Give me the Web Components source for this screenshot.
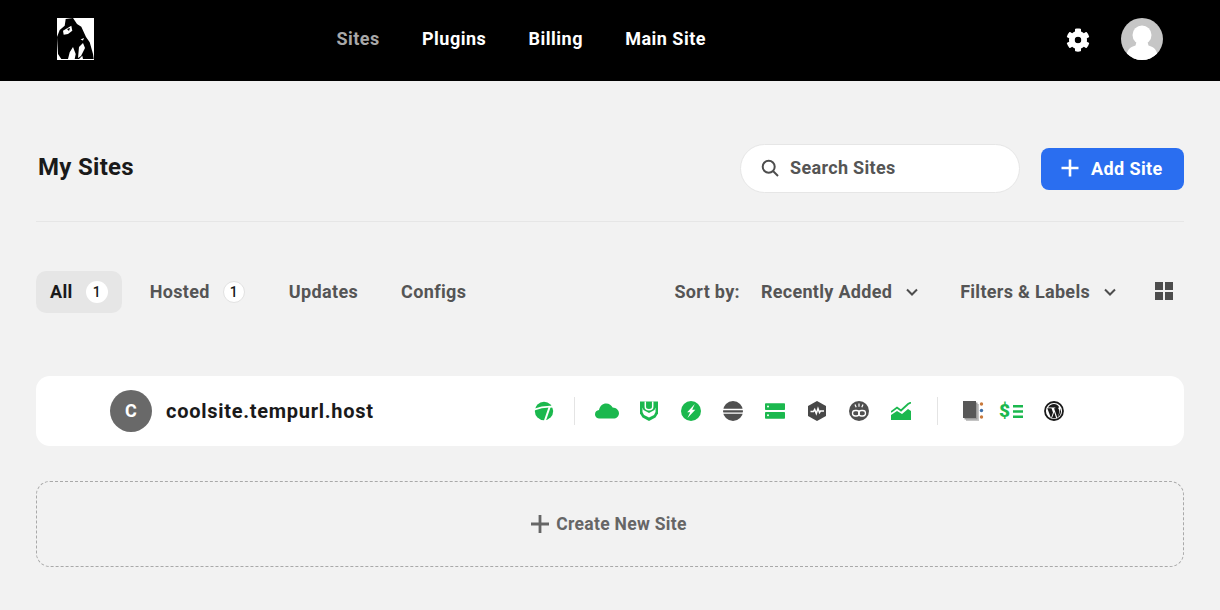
<!DOCTYPE html>
<html lang="en"><head><meta charset="utf-8"><title>My Sites</title>
<style>
html,body{margin:0;padding:0;background:#f2f2f2;font-family:Roboto,"Liberation Sans",sans-serif;height:610px;overflow:hidden}
</style></head><body>
<app-header></app-header>
<sites-page></sites-page>
<script>
const G='#1bb84e',D='#4f4f4f';
const ICONS={
 turn:`<svg viewBox="0 0 20 20" width="20" height="20"><circle cx="10" cy="10" r="9.200" fill="${G}"/><path d="M0 8.600C6 6.200 13 5.200 20 5.800" fill="none" stroke="#fff" stroke-width="1.700"/><path d="M15.800 5.500 10.800 20" fill="none" stroke="#fff" stroke-width="2"/></svg>`,
 cloud:`<svg viewBox="0 0 24 16" width="24" height="16"><path d="M5 15.600C2.200 15.600 0 13.800 0 11.200 0 8.900 1.800 7.300 4 7 4.700 3 7.600.4 11.200.4c3 0 5.400 1.700 6.400 4.200 3.600.1 6.400 2.800 6.400 5.700 0 3-2.400 5.300-5.600 5.300z" fill="${G}"/></svg>`,
 shield:`<svg viewBox="0 0 20 20" width="20" height="20"><path d="M1 .5h18v12l-2.500 4-6.500 3.500-6.500-3.500-2.500-4z" fill="${G}"/><path d="M6.300 .5v5.200c0 2 1.700 3 3.700 3s3.700-1 3.700-3V.5" fill="none" stroke="#fff" stroke-width="1.500"/><path d="M3.500 6.500l1 2.500L10 12l5.500-3 1-2.500V11l-1.500 3-5 2.500L5 14l-1.500-3z" fill="#fff"/></svg>`,
 bolt:`<svg viewBox="0 0 20 20" width="20" height="20"><circle cx="10" cy="10" r="10" fill="${G}"/><path d="M13.800 3 6.200 11.200h3L6.500 17l7.800-8.300h-3.100z" fill="#fff"/></svg>`,
 eclipse:`<svg viewBox="0 0 20 20" width="20" height="20"><circle cx="10" cy="10" r="10" fill="${D}"/><path d="M0 7.800h20v1.400H0zM0 11.400h20v1.400H0z" fill="#fff"/></svg>`,
 server:`<svg viewBox="0 0 20 16" width="20" height="16"><rect y=".3" width="20" height="6.700" rx=".8" fill="${G}"/><rect y="9" width="20" height="6.700" rx=".8" fill="${G}"/><circle cx="3" cy="3.600" r="1" fill="#fff"/><circle cx="3" cy="12.300" r="1" fill="#fff"/></svg>`,
 hex:`<svg viewBox="0 0 18 20" width="18" height="20"><path d="M9 0l9 5v10l-9 5-9-5V5z" fill="#484848"/><path d="M2.500 10.500h3l1.200-2 1.600 4 1.700-5 1.500 4 1-1.500h3.500" fill="none" stroke="#fff" stroke-width="1.500"/></svg>`,
 cs:`<svg viewBox="0 0 20 20" width="20" height="20"><circle cx="10" cy="10" r="10" fill="${D}"/><path d="M10 2.500v3.200M6 3.500l1.200 2.700M14 3.500l-1.200 2.700" stroke="#fff" stroke-width="1.200"/><rect x="3.500" y="9.500" width="6.800" height="5.500" rx="2.700" fill="none" stroke="#fff" stroke-width="1.300"/><rect x="9.700" y="9.500" width="6.800" height="5.500" rx="2.700" fill="none" stroke="#fff" stroke-width="1.300"/></svg>`,
 chart:`<svg viewBox="0 0 20 18" width="20" height="18"><path d="M0 13l6-4 5 3 6-5 3 2v9H0z" fill="${G}"/><path d="M0 10l6-4.500 4 3L17 2l3-1.500" fill="none" stroke="${G}" stroke-width="1.800"/></svg>`,
 pages:`<svg viewBox="0 0 21 20" width="21" height="20"><rect x="3" y="3" width="13" height="17" fill="#c4c4c4"/><rect x="1.500" y="1.500" width="13" height="17" fill="#9a9a9a"/><rect width="13" height="17" fill="#585858"/><circle cx="18.500" cy="3" r="1.700" fill="#c8793c"/><circle cx="18.500" cy="9.500" r="1.700" fill="#3f6fa8"/><circle cx="18.500" cy="16" r="1.700" fill="#c8793c"/></svg>`,
 bars:`<svg viewBox="0 0 10 13" width="10" height="13"><path d="M0 0h10v2.500H0zM0 5.250h10v2.500H0zM0 10.500h10V13H0z" fill="${G}"/></svg>`,
 wp:`<svg viewBox="0 0 20 20" width="20" height="20"><circle cx="10" cy="10" r="9" fill="none" stroke="#1a1a1a" stroke-width="1.800"/><path d="M3.300 7.200 7 17.300l2-5.700-1.500-4.300H6.300v-.9h5v.9H10l3.500 10 1.600-5.500c.5-1.800.2-2.800-.5-3.900-.5-.7-.4-1.600.6-1.700C14 4 12.200 3.100 10 3.100c-2.500 0-4.800 1.600-6 3.400h2.300v.7z M10.200 11 8 17c1.300.4 2.700.4 4.100-.1zM16.400 7.300c.2 2-.3 3.300-2.400 9 2.300-1.500 4-5.500 2.400-9z" fill="#1a1a1a"/></svg>`
};
function def(name,css,html){
 customElements.define(name,class extends HTMLElement{
  connectedCallback(){
   if(this.shadowRoot)return;
   const s=this.attachShadow({mode:'open'});
   s.innerHTML=`<style>${css}</style>`+html;
  }
 });
}
def('gorilla-logo',':host{display:block;width:37px;height:42px;background:#fff} svg{display:block}',
 `<svg viewBox="0 0 37 42" width="37" height="42"><path d="M8.700 1 16 0l4 6 4.300 2.700L29 19l3.700 5.300L36 36l.7 5H26l-.7-3.300L22 41h-4.300l1-5L16 29l-3.300 5.300L11 41H4.300L1 36 0 19l2.700-7 5-4.300z" fill="#000"/><path d="M6 12.700l8.300-5 1 5-4.300 3.300-4.300.7z" fill="#fff"/><path d="M10 11l3-1-1 3z" fill="#000"/><path d="M22 29l4-4 2 5-4 8-3 2z" fill="#fff"/><path d="M23.500 21.500l3.500-1.500-1 2.500z" fill="#fff"/></svg>`);
def('nav-link',':host{display:block;font:700 18px/22px Roboto,sans-serif;letter-spacing:.5px;color:#fff;white-space:nowrap} :host([active]){color:#a8a8a8}','<slot></slot>');
def('app-header',
 `:host{display:flex;align-items:center;height:81px;background:#000;box-sizing:border-box;padding:0 57px 3px}
  nav{display:flex;gap:42.200px;margin-left:242.400px}
  .r{margin-left:auto;display:flex;align-items:center}
  .gear{display:block;width:24px;height:24px;margin-top:2px}
  .av{margin-left:31px;width:42px;height:42px;display:block}`,
 `<gorilla-logo></gorilla-logo>
  <nav><nav-link active>Sites</nav-link><nav-link>Plugins</nav-link><nav-link>Billing</nav-link><nav-link>Main Site</nav-link></nav>
  <div class="r"><svg class="gear" viewBox="0 0 512 512"><path fill="#fff" d="M487.4 315.7l-42.6-24.6c4.3-23.2 4.3-47 0-70.2l42.6-24.6c4.900-2.800 7.100-8.600 5.500-14-11.100-35.600-30-67.800-54.700-94.600-3.800-4.100-10-5.100-14.800-2.300L380.800 110c-17.900-15.400-38.500-27.300-60.800-35.100V25.800c0-5.600-3.900-10.500-9.400-11.700-36.700-8.200-74.300-7.800-109.200 0-5.500 1.200-9.400 6.100-9.400 11.700V75c-22.200 7.900-42.800 19.800-60.800 35.100L88.700 85.500c-4.900-2.800-11-1.900-14.800 2.300-24.700 26.700-43.600 58.900-54.700 94.600-1.700 5.400.6 11.200 5.500 14L67.300 221c-4.300 23.200-4.300 47 0 70.200l-42.600 24.600c-4.900 2.800-7.100 8.600-5.500 14 11.100 35.600 30 67.800 54.700 94.600 3.800 4.100 10 5.100 14.800 2.300l42.600-24.600c17.900 15.400 38.500 27.300 60.800 35.100v49.200c0 5.600 3.900 10.500 9.400 11.700 36.700 8.200 74.300 7.800 109.200 0 5.500-1.200 9.400-6.100 9.400-11.700v-49.200c22.200-7.900 42.800-19.800 60.800-35.100l42.600 24.600c4.900 2.800 11 1.900 14.800-2.300 24.700-26.700 43.600-58.900 54.700-94.600 1.500-5.500-.7-11.300-5.600-14.100zM256 336c-44.100 0-80-35.900-80-80s35.900-80 80-80 80 35.900 80 80-35.900 80-80 80z"/><circle cx="256" cy="256" r="95" fill="none" stroke="#fff" stroke-width="50"/></svg>
  <svg class="av" viewBox="0 0 42 42"><defs><clipPath id="c"><circle cx="21" cy="21" r="21"/></clipPath></defs><circle cx="21" cy="21" r="21" fill="#c6c6c6"/><g clip-path="url(#c)" fill="#fff"><circle cx="21" cy="17" r="9.500"/><path d="M15.500 24h11l1 3.500C33 29 37 32 37 42H5c0-10 4-13 9.500-14.500z"/></g></svg></div>`);
def('search-box',
 `:host{display:flex;align-items:center;box-sizing:border-box;width:280px;height:49px;background:#fff;border:1px solid #e6e6e6;border-radius:25px;padding:0 0 0 20px;font:700 18px Roboto,sans-serif;color:#555;letter-spacing:.33px}
  span{display:block;padding-bottom:2px}
  svg{width:18px;height:18px;margin-right:11px;flex:none}`,
 `<svg viewBox="0 0 18 18"><circle cx="7.700" cy="7.700" r="6" fill="none" stroke="#4d4d4d" stroke-width="2"/><path d="M12 12l5 5" stroke="#4d4d4d" stroke-width="2"/></svg><span><slot></slot></span>`);
def('primary-button',
 `:host{display:flex;align-items:center;box-sizing:border-box;width:143px;height:42px;background:#2a6ef0;border-radius:8px;padding-left:20px;font:700 18px Roboto,sans-serif;letter-spacing:.4px;color:#fff}
  span{display:block;padding-bottom:2px}
  svg{width:18px;height:18px;margin:-2px 12px 0 0;flex:none}`,
 `<svg viewBox="0 0 18 18"><path d="M9 .5v17M.5 9h17" stroke="#fff" stroke-width="2.600"/></svg><span><slot></slot></span>`);
def('tab-chip',
 `:host{display:flex;align-items:center;box-sizing:border-box;height:42px;padding:0 14px;font:700 18px Roboto,sans-serif;letter-spacing:.35px;color:#555;border-radius:10px}
  :host([active]){background:#e6e6e6;color:#1a1a1a}
  span{display:block;padding-bottom:2px}
  b{display:none;width:22px;height:22px;box-sizing:border-box;border-radius:50%;background:#fff;margin-left:13px;font:500 14px/22px Roboto,sans-serif;letter-spacing:0;color:#1a1a1a;text-align:center}
  :host([count]) b{display:block}
  :host(:not([active])) b{border:1px solid #e2e2e2;line-height:20px}`,
 `<span><slot></slot></span><b>1</b>`);
def('drop-select',
 `:host{display:flex;align-items:center;font:700 18px Roboto,sans-serif;letter-spacing:.3px;color:#555;white-space:nowrap}
  span{display:block;padding-bottom:2px}
  svg{width:12px;height:8px;margin-left:14px;flex:none}`,
 `<span><slot></slot></span><svg viewBox="0 0 12 8"><path d="M1 1.500l5 5 5-5" fill="none" stroke="#4d4d4d" stroke-width="2"/></svg>`);
customElements.define('status-icon',class extends HTMLElement{
 connectedCallback(){
  if(this.shadowRoot)return;
  const s=this.attachShadow({mode:'open'});
  const w=this.getAttribute('w')||42;
  s.innerHTML=`<style>:host{display:flex;align-items:center;justify-content:center;width:${w}px;height:22px;flex:none;gap:3px;font:900 19px/22px Roboto,sans-serif;color:${G}} svg{display:block}</style><slot></slot>`+(ICONS[this.getAttribute('name')]||'');
 }
});
def('icon-sep',':host{display:block;width:1px;height:28px;background:#e4e4e4;flex:none}','');
def('site-row',
 `:host{display:flex;align-items:center;box-sizing:border-box;height:70px;background:#fff;border-radius:14px;padding-left:74px}
  .c{width:42px;height:42px;border-radius:50%;background:#696969;color:#fff;font:700 18px/42px Roboto,sans-serif;text-align:center;flex:none}
  .n{margin-left:14px;width:357px;font:700 20px Roboto,sans-serif;color:#1a1a1a;letter-spacing:.72px;flex:none}
  .g{display:flex;align-items:center}`,
 `<div class="c">C</div><div class="n">coolsite.tempurl.host</div>
  <div class="g"><status-icon name="turn"></status-icon><icon-sep style="margin:0 11px 0 9px"></icon-sep>
  <status-icon name="cloud"></status-icon><status-icon name="shield"></status-icon><status-icon name="bolt"></status-icon><status-icon name="eclipse"></status-icon><status-icon name="server"></status-icon><status-icon name="hex"></status-icon><status-icon name="cs"></status-icon><status-icon name="chart"></status-icon>
  <icon-sep style="margin:0 14px 0 15px"></icon-sep>
  <status-icon name="pages"></status-icon><status-icon name="bars" w="34">$</status-icon><status-icon name="wp" w="52"></status-icon></div>`);
def('create-box',
 `:host{display:flex;align-items:center;justify-content:center;box-sizing:border-box;height:86px;border:1px dashed #a9a9a9;border-radius:14px;font:700 17.500px Roboto,sans-serif;letter-spacing:.3px;color:#666;padding-right:2px}
  svg{width:18px;height:18px;margin-right:7px}`,
 `<svg viewBox="0 0 18 18"><path d="M9 0v18M0 9h18" stroke="#666" stroke-width="2.800"/></svg><slot></slot>`);
def('sites-page',
 `:host{display:block;padding:0 36px}
  .top{display:flex;align-items:center;height:141px;border-bottom:1px solid #e6e6e6;box-sizing:border-box;padding-top:34px}
  h1{margin:0 auto 2px 2px;font:700 24px Roboto,sans-serif;letter-spacing:.3px;color:#1a1a1a}
  primary-button{margin-left:21px;margin-top:2px}
  .tabs{display:flex;align-items:center;margin-top:49px;height:42px}
  .sort{display:flex;align-items:center;margin-left:auto;font:700 18px Roboto,sans-serif;letter-spacing:.3px;color:#555}
  .sort>span{padding-bottom:2px}
  .grid{display:grid;grid-template-columns:8px 8px;gap:2px;margin:0 11px 2px 39px}
  .grid i{display:block;width:8px;height:8px;background:#4d4d4d}
  site-row{margin-top:63px}
  create-box{margin-top:35px}`,
 `<div class="top"><h1>My Sites</h1><search-box>Search Sites</search-box><primary-button>Add Site</primary-button></div>
  <div class="tabs"><tab-chip active count>All</tab-chip><tab-chip count style="margin-left:14px">Hosted</tab-chip><tab-chip style="margin-left:16px">Updates</tab-chip><tab-chip style="margin-left:15px">Configs</tab-chip>
  <div class="sort"><span>Sort by:</span><drop-select style="margin-left:21px">Recently Added</drop-select><drop-select style="margin-left:42px">Filters &amp; Labels</drop-select><div class="grid"><i></i><i></i><i></i><i></i></div></div></div>
  <site-row></site-row><create-box>Create New Site</create-box>`);
</script>
</body></html>
